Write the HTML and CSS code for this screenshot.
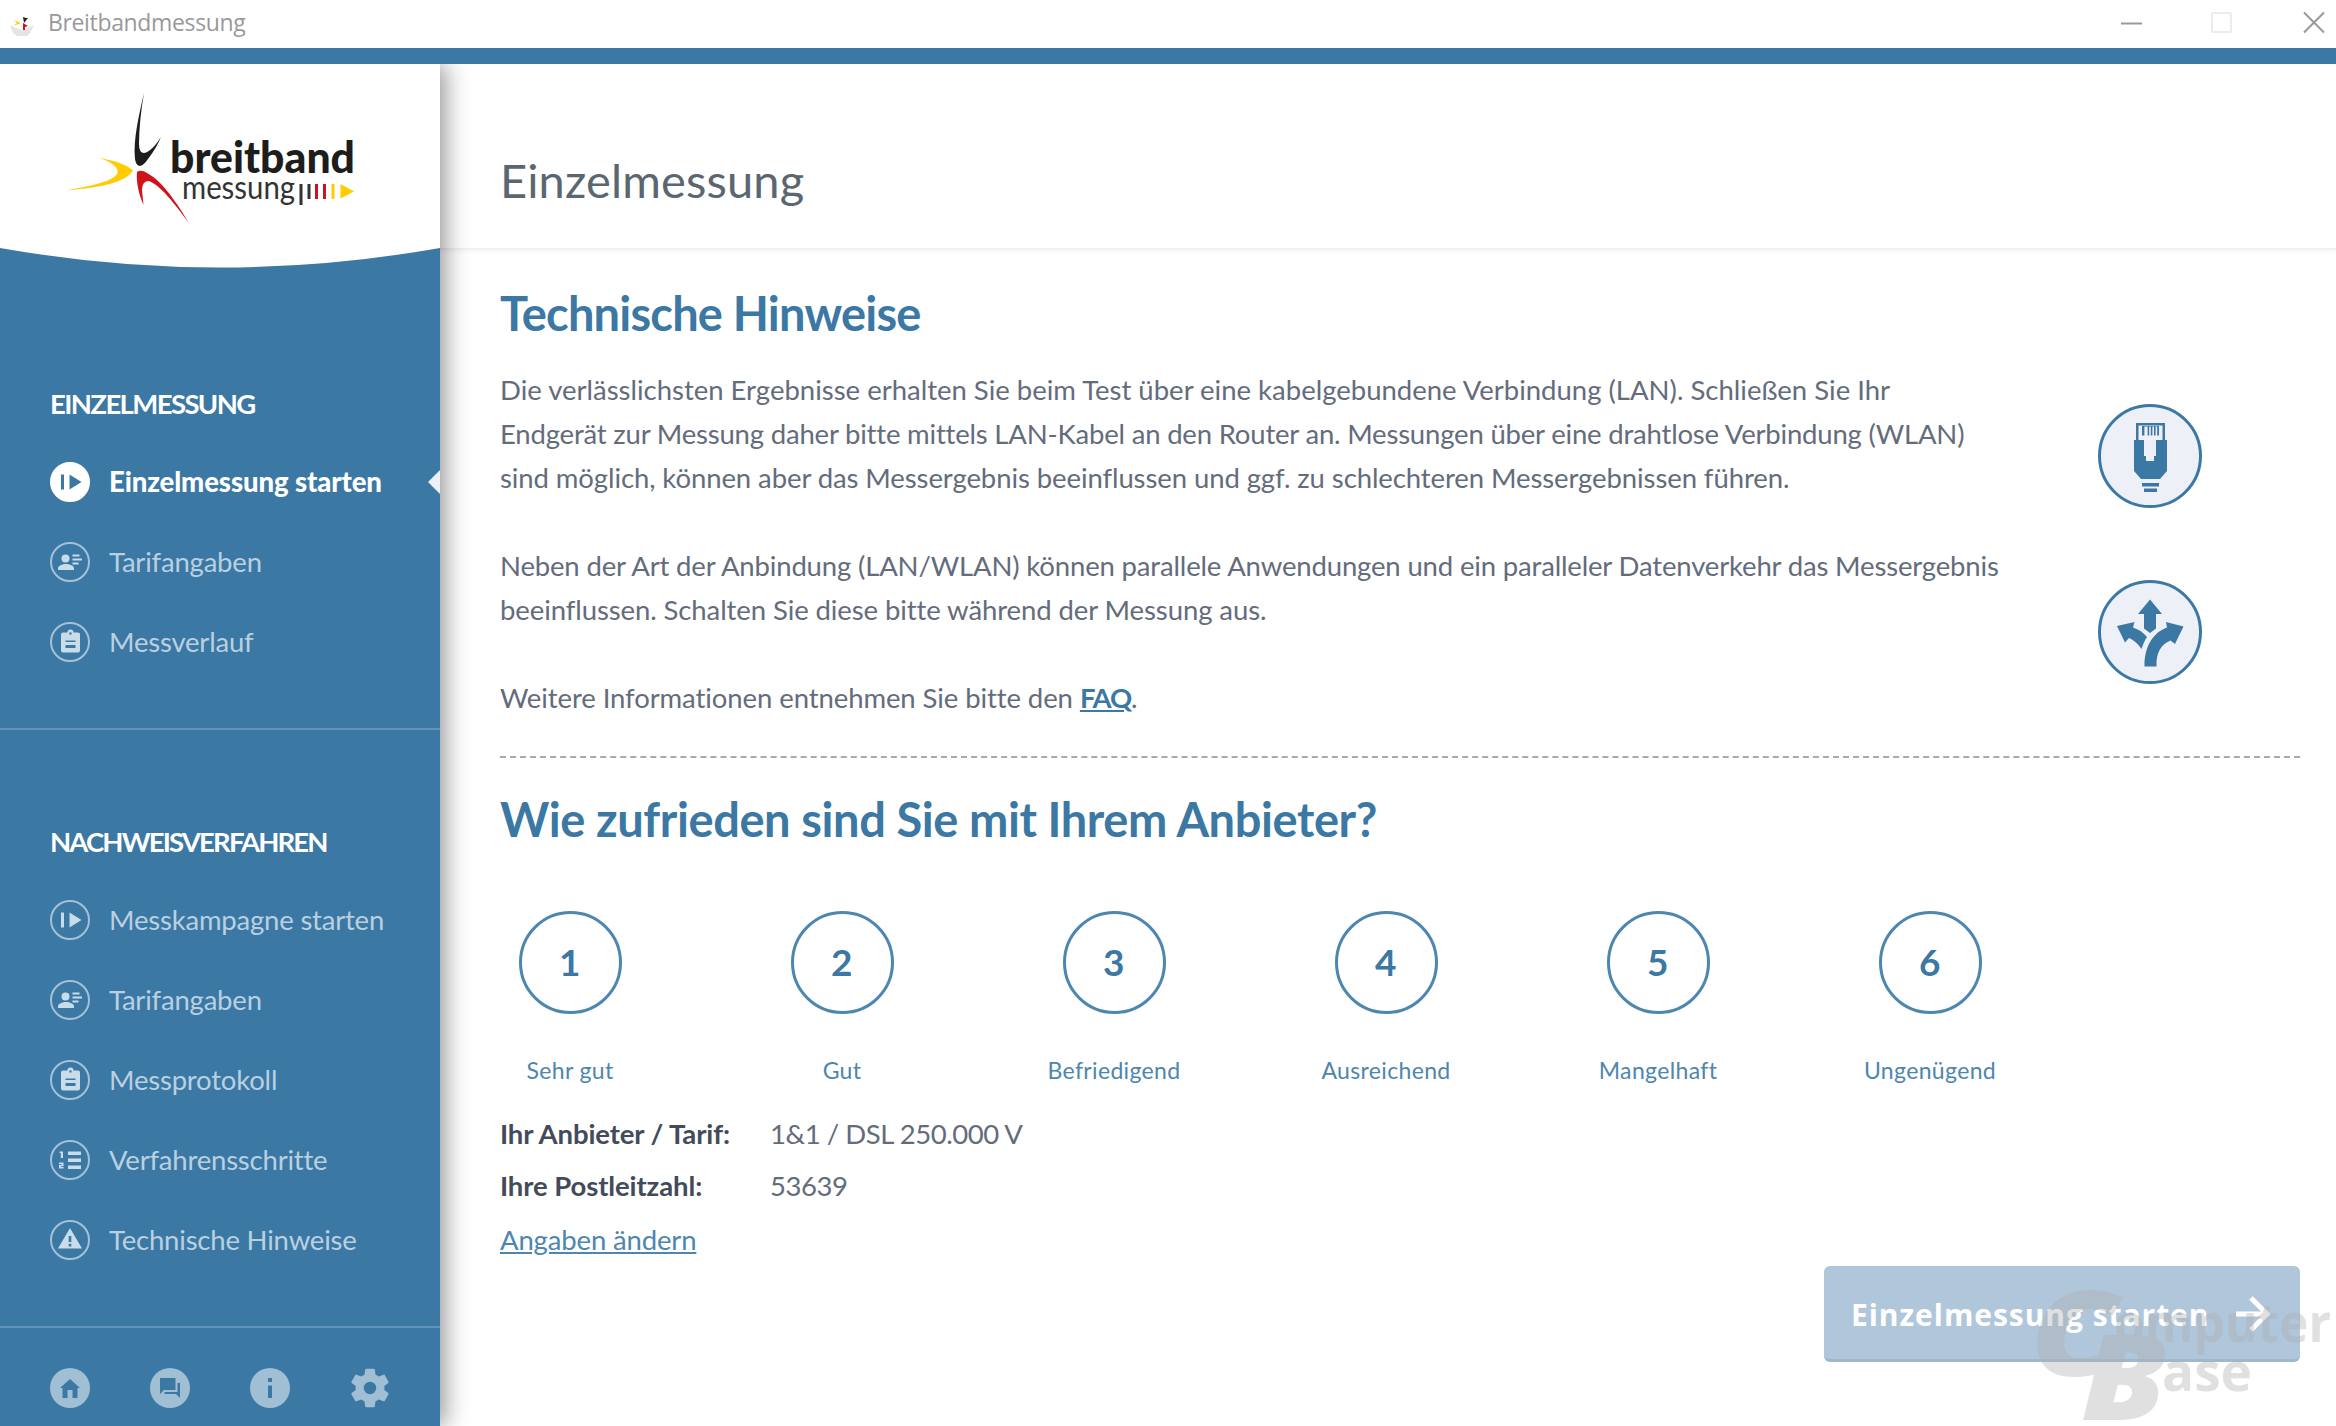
FILE: index.html
```
<!DOCTYPE html>
<html lang="de">
<head>
    <meta charset="UTF-8">
    <meta name="viewport" content="width=device-width, initial-scale=1.0">
    <title>Breitbandmessung</title>
    <link rel="stylesheet" href="styles.css">
</head>
<body>
    <svg class="defs" width="0" height="0">
        <symbol id="i-start" viewBox="0 0 40 40">
            <path d="M11 12.5h3v15h-3zM19.5 12.5l12 7.5-12 7.5z"/>
        </symbol>
        <symbol id="i-tarif" viewBox="0 0 40 40">
            <circle cx="15.5" cy="16.5" r="4"/>
            <path d="M8 28v-1.5c0-3 4.5-4.5 8-4.5s8 1.5 8 4.5V28z"/>
            <path d="M22.5 12.5h7v2h-7zM22.5 16.5h9.500v2h-9.500zM22.500 20.500h6v2h-6z"/>
        </symbol>
        <symbol id="i-clip" viewBox="0 0 40 40">
            <path fill-rule="evenodd" d="M13 10.500h4.500a3 3 0 0 1 6 0H28a2 2 0 0 1 2 2V28.500a2 2 0 0 1-2 2H13a2 2 0 0 1-2-2V12.500a2 2 0 0 1 2-2zM19.300 11.500a1.200 1.200 0 1 0 2.400 0 1.200 1.200 0 0 0-2.400 0zM15.500 18.500v1.500h10v-1.500zM15.500 23v3h10v-3z"/>
        </symbol>
        <symbol id="i-list" viewBox="0 0 40 40">
            <path d="M18 11.500h13v3.500H18zM18 18.500h13v3.500H18zM18 25.500h13v3.500H18zM9.500 11.500H13V18h-2.200v-5H9.500zM9 22.500h4.500v3.700h-2.700v.8h2.700v1.500H9v-3.700h2.700V24H9z"/>
        </symbol>
        <symbol id="i-warn" viewBox="0 0 40 40">
            <path fill-rule="evenodd" d="M20 8l12 20.500H8zM18.700 16v6h2.600v-6zM18.700 23.800v2.600h2.600v-2.600z"/>
        </symbol>
    </svg>

    <div class="window">
        <div class="titlebar">
            <svg class="app-icon" width="28" height="28" viewBox="0 0 28 28">
                <path d="M2 17l4 2 8 3 8-3 4-2-4 8-3 3H9l-4-3z" fill="#e4e4e4"/>
                <path d="M6 12l7 3-8 3 4-3z" fill="#fc0"/>
                <path d="M15 9l3 1h2l-4 5z" fill="#222"/>
                <path d="M15 15l5 3-3 1v3h-2z" fill="#d0121b"/>
            </svg>
            <span class="app-name">Breitbandmessung</span>
            <svg class="controls" width="206" height="24" viewBox="0 0 206 24" fill="none">
                <path d="M2 13.500H23" stroke="#999" stroke-width="2"/>
                <rect x="93" y="3" width="19" height="19" rx="1" stroke="#ececec" stroke-width="2"/>
                <path d="M185 2.500l20 20M205 2.500l-20 20" stroke="#999" stroke-width="2"/>
            </svg>
        </div>

        <div class="body">
            <aside class="sidebar">
                <svg class="logo" width="440" height="204" viewBox="0 64 440 204">
                    <path d="M0 64H440V248Q220 287 0 248z" fill="#fff"/>
                    <path d="M144 93C139 115 133 140 135 159Q136 166 140 166Q144 165 148 159C154 151 158 144 161 137C155 146 150 152 144 153Q139 153 139 144C139 128 141 110 144 93z" fill="#1d1d1b"/>
                    <path d="M99 158C112 160 126 164 133 170.500C127 180 110 187 65 190.500C90 186 112 182 117 174C120 168 112 162 99 158z" fill="#fc0"/>
                    <path d="M137 172Q141 169 147 173C160 180 172 195 189 223C175 204 160 185 149 181Q142 181 142 190L143.500 205C139 195 136 182 137 172z" fill="#d0121b"/>
                    <text class="logo-bold" x="170" y="172.500" textLength="185" lengthAdjust="spacingAndGlyphs">breitband</text>
                    <text class="logo-thin" x="182" y="199" textLength="113" lengthAdjust="spacingAndGlyphs">messung</text>
                    <path d="M299.500 184h3v21h-3zM307.500 184h3v15h-3z" fill="#333"/>
                    <path d="M315 184h3v15h-3zM323 184h3v15h-3z" fill="#d0121b"/>
                    <path d="M331.500 184h3v15h-3zM340.500 184l13.500 7.500-13.500 7z" fill="#fc0"/>
                </svg>

                <nav class="group">
                    <h3 class="tight-1">EINZELMESSUNG</h3>
                    <a class="item active"><span class="badge"><svg><use href="#i-start"/></svg></span>Einzelmessung starten</a>
                    <a class="item"><span class="badge"><svg><use href="#i-tarif"/></svg></span>Tarifangaben</a>
                    <a class="item"><span class="badge"><svg><use href="#i-clip"/></svg></span>Messverlauf</a>
                </nav>
                <nav class="group second">
                    <h3 class="tight-2">NACHWEISVERFAHREN</h3>
                    <a class="item"><span class="badge"><svg><use href="#i-start"/></svg></span>Messkampagne starten</a>
                    <a class="item"><span class="badge"><svg><use href="#i-tarif"/></svg></span>Tarifangaben</a>
                    <a class="item"><span class="badge"><svg><use href="#i-clip"/></svg></span>Messprotokoll</a>
                    <a class="item"><span class="badge"><svg><use href="#i-list"/></svg></span>Verfahrensschritte</a>
                    <a class="item"><span class="badge"><svg><use href="#i-warn"/></svg></span>Technische Hinweise</a>
                </nav>
                <div class="tools">
                    <svg viewBox="0 0 40 40"><path fill-rule="evenodd" d="M20 0a20 20 0 1 0 0 40 20 20 0 0 0 0-40zM20 11l10 9h-2.500v10H22.500v-8h-5v8H12.500V20H10z"/></svg>
                    <svg viewBox="0 0 40 40"><path fill-rule="evenodd" d="M20 0a20 20 0 1 0 0 40 20 20 0 0 0 0-40zM10 10h15.500v12H14l-4 4zM27.500 15H30v15l-4-4H14.500v-2h13z"/></svg>
                    <svg viewBox="0 0 40 40"><path fill-rule="evenodd" d="M20 0a20 20 0 1 0 0 40 20 20 0 0 0 0-40zM18 10v4h4v-4zM18 17.500v12.500h4V17.500z"/></svg>
                    <svg viewBox="2 2 20 20"><path d="M19.140 12.940c.04-.3.06-.61.06-.94 0-.32-.02-.64-.07-.94l2.030-1.580c.18-.14.23-.41.12-.61l-1.920-3.320c-.12-.22-.37-.29-.59-.22l-2.390.96c-.5-.38-1.030-.7-1.620-.94l-.36-2.540c-.04-.24-.24-.41-.48-.41h-3.840c-.24 0-.43.17-.47.41l-.36 2.540c-.59.24-1.130.57-1.620.94l-2.390-.96c-.22-.08-.47 0-.59.22L2.740 8.870c-.12.21-.08.47.12.61l2.030 1.580c-.05.3-.09.63-.09.94s.02.64.07.94l-2.030 1.580c-.18.14-.23.41-.12.61l1.920 3.320c.12.22.37.29.59.22l2.390-.96c.5.38 1.030.7 1.620.94l.36 2.540c.05.24.24.41.48.41h3.840c.24 0 .44-.17.47-.41l.36-2.540c.59-.24 1.130-.56 1.620-.94l2.390.96c.22.08.47 0 .59-.22l1.920-3.320c.12-.22.07-.47-.12-.61l-2.010-1.580zM12 15.100a3.100 3.100 0 1 1 0-6.200 3.100 3.100 0 0 1 0 6.200z"/></svg>
                </div>
            </aside>

            <main class="main">
                <header class="head">
                    <h1>Einzelmessung</h1>
                </header>
                <div class="content">
                    <h2 class="h-hints">Technische Hinweise</h2>
                    <div class="hints">
                        <div class="hint-text">
                            <p>Die verlässlichsten Ergebnisse erhalten Sie beim Test über eine kabelgebundene Verbindung (LAN). Schließen Sie Ihr<br>
                            <span class="t1">Endgerät zur Messung daher bitte mittels LAN-Kabel an den Router an. Messungen über eine drahtlose Verbindung (WLAN)</span><br>
                            <span class="t3">sind möglich, können aber das Messergebnis beeinflussen und ggf. zu schlechteren Messergebnissen führen.</span></p>
                            <p><span class="t2">Neben der Art der Anbindung (LAN/WLAN) können parallele Anwendungen und ein paralleler Datenverkehr das Messergebnis</span><br>
                            <span class="t3">beeinflussen. Schalten Sie diese bitte während der Messung aus.</span></p>
                            <p><span class="t3">Weitere Informationen entnehmen Sie bitte den</span> <a class="faq">FAQ</a>.</p>
                        </div>
                        <div class="hint-icons">
                            <svg width="104" height="104" viewBox="0 0 104 104">
                                <circle cx="52" cy="52" r="50.500" fill="#eef0f7" stroke="#3b78a4" stroke-width="3"/>
                                <path fill="#3b78a4" fill-rule="evenodd" d="M38 19h29v17h2v31l-7 8H43l-7-8V36h2zM40.500 21.500V36H46v16h2v5h8v-5h2V36h6.500V21.500z"/>
                                <path fill="#3b78a4" d="M44 22h17v9.500h-1.800v-9h-1.600v9h-1.600v-9h-1.600v9h-1.600v-9h-1.600v9h-1.600v-9h-1.600v9H48v-9h-1.600v9H44zM44 79h17v3.500H44zM46 84.500h13V88H46z"/>
                            </svg>
                            <svg width="104" height="104" viewBox="0 0 104 104">
                                <circle cx="52" cy="52" r="50.500" fill="#eef0f7" stroke="#3b78a4" stroke-width="3"/>
                                <g fill="#3b78a4">
                                    <path d="M52 19.500L64 34h-6v14.500L52 53l-6-4.500V34h-6z"/>
                                    <path d="M19 46l17.500-4-1.500 5.500c6 2 10.500 5 14 9.500-2.500 3.500-4 7.500-5.500 12-3.500-5.500-8-9-12.500-11l-4 4.500z"/>
                                    <path d="M85.500 46.500L68 42l1 5.500C56 52 46 66 46.500 86.500h12c-.5-14 4.500-22 14-26l4.500 3.500z"/>
                                </g>
                            </svg>
                        </div>
                    </div>

                    <h2 class="h-rate">Wie zufrieden sind Sie mit Ihrem Anbieter?</h2>
                    <div class="rating">
                        <div class="rate"><b>1</b><span>Sehr gut</span></div>
                        <div class="rate"><b>2</b><span>Gut</span></div>
                        <div class="rate"><b>3</b><span>Befriedigend</span></div>
                        <div class="rate"><b>4</b><span>Ausreichend</span></div>
                        <div class="rate"><b>5</b><span>Mangelhaft</span></div>
                        <div class="rate"><b>6</b><span>Ungenügend</span></div>
                    </div>

                    <dl class="info">
                        <dt>Ihr Anbieter / Tarif:</dt><dd>1&amp;1 / DSL 250.000 V</dd>
                        <dt>Ihre Postleitzahl:</dt><dd>53639</dd>
                    </dl>
                    <a class="change">Angaben ändern</a>

                    <button class="start">
                        <span>Einzelmessung starten</span>
                        <svg width="36" height="36" viewBox="0 0 36 36" fill="none" stroke="#fff" stroke-width="5"><path d="M1 18H32M16 2l16 16-16 16"/></svg>
                    </button>
                </div>
            </main>
        </div>

        <svg class="watermark" width="306" height="146" viewBox="2030 1280 306 146">
            <g fill="#aeaeae">
                <text class="wm-big" x="2030" y="1376" textLength="88" lengthAdjust="spacingAndGlyphs">C</text>
                <text class="wm-big" x="2081" y="1420" textLength="86" lengthAdjust="spacingAndGlyphs">B</text>
                <text class="wm" x="2114" y="1342" textLength="217" lengthAdjust="spacingAndGlyphs">omputer</text>
                <text class="wm" x="2162" y="1391" textLength="90" lengthAdjust="spacingAndGlyphs">ase</text>
            </g>
        </svg>
    </div>
</body>
</html>
```
FILE: styles.css
```
* {
    margin: 0;
    padding: 0;
    box-sizing: border-box;
}
body {
    background: #fff;
    color: #646c7c;
    font-family: Lato, "Open Sans", sans-serif;
    font-size: 27.5px;
    line-height: 44px;
}
.defs {
    display: block;
}
.window {
    position: relative;
    display: flex;
    flex-direction: column;
    width: 2336px;
    height: 1426px;
    overflow: hidden;
}

/* title bar */
.titlebar {
    display: flex;
    align-items: center;
    flex: none;
    height: 64px;
    padding: 0 11px 4px 8px;
    border-bottom: 16px solid #3b78a4;
}
.app-icon {
    margin-right: 12px;
}
.app-name {
    padding-bottom: 1px;
    color: #999;
    font-family: "Open Sans", sans-serif;
    font-size: 23px;
    letter-spacing: -0.35px;
}
.controls {
    margin-left: auto;
}

/* sidebar */
.body {
    display: flex;
    flex: 1;
    min-height: 0;
}
.sidebar {
    position: relative;
    z-index: 1;
    display: flex;
    flex-direction: column;
    flex: none;
    width: 440px;
    background: #3b78a4;
    box-shadow: 4px 0 24px rgba(0, 0, 0, 0.45);
    clip-path: inset(0 -50px 0 0);
}
.logo {
    display: block;
    flex: none;
}
.logo-bold {
    font-size: 43px;
    font-weight: 900;
    fill: #1d1d1b;
}
.logo-thin {
    font-size: 32px;
    fill: #333;
}
.group {
    flex: none;
    height: 462px;
    padding: 116px 0 0 50px;
    border-bottom: 2px solid #6295b9;
}
.group.second {
    height: 598px;
    padding-top: 92px;
}
.group h3 {
    margin-bottom: 18px;
    color: #fff;
    font-size: 27.5px;
    line-height: 40px;
}
.tight-1 {
    letter-spacing: -1.6px;
}
.tight-2 {
    letter-spacing: -1.85px;
}
.item {
    position: relative;
    display: flex;
    align-items: center;
    height: 80px;
    color: #b9d0e1;
    letter-spacing: -0.2px;
}
.badge {
    width: 40px;
    height: 40px;
    margin-right: 19px;
    border: 2px solid #a3c2d8;
    border-radius: 50%;
    fill: #c9dcea;
}
.badge svg {
    display: block;
    width: 40px;
    height: 40px;
    margin: -2px;
}
.item.active {
    color: #fff;
    font-weight: 900;
    letter-spacing: -0.1px;
}
.active .badge {
    background: #fff;
    border-color: #fff;
    fill: #3b78a4;
}
.active::after {
    content: "";
    position: absolute;
    right: 0;
    border: 12px solid transparent;
    border-right-color: #eef0f7;
    border-left-width: 0;
}
.tools {
    display: flex;
    gap: 60px;
    padding: 40px 50px 0;
}
.tools svg {
    width: 40px;
    height: 40px;
    fill: #a0bfd4;
}

/* main */
.main {
    flex: 1;
}
.head {
    height: 186px;
    padding: 86px 60px 0;
    border-bottom: 2px solid #f1f1f1;
    box-shadow: 0 2px 3px rgba(0, 0, 0, 0.03);
}
h1 {
    color: #5b6770;
    font-size: 47px;
    font-weight: 400;
    line-height: 60px;
    letter-spacing: 0.15px;
}
.content {
    display: flex;
    flex-direction: column;
    padding: 33px 36px 0 60px;
}
h2 {
    color: #3b78a4;
    font-size: 47px;
    line-height: 60px;
}
.h-hints {
    letter-spacing: -0.8px;
}
.h-rate {
    margin-top: 31px;
    letter-spacing: -0.4px;
}
.hints {
    display: flex;
    justify-content: space-between;
    padding: 25px 98px 36px 0;
    border-bottom: 2px dashed #aaa;
}
.hint-text p + p {
    margin-top: 44px;
}
.hint-text {
    white-space: nowrap;
}
.t1 {
    letter-spacing: -0.19px;
}
.t2 {
    letter-spacing: -0.16px;
}
.t3 {
    letter-spacing: -0.09px;
}
.faq {
    color: #3b78a4;
    font-weight: 700;
    letter-spacing: -1.2px;
    text-decoration: underline;
}
.hint-icons {
    display: flex;
    flex-direction: column;
    gap: 72px;
    padding-top: 36px;
}
.rating {
    display: flex;
    margin: 62px 0 0 -66px;
}
.rate {
    display: flex;
    flex-direction: column;
    align-items: center;
    width: 272px;
    color: #4d86af;
    font-size: 23px;
    line-height: 32px;
    letter-spacing: 0.35px;
}
.rate b {
    width: 103px;
    height: 103px;
    margin-bottom: 40px;
    border: 3px solid #4d86af;
    border-radius: 50%;
    color: #3b78a4;
    font-size: 37px;
    line-height: 95px;
    text-align: center;
}
.info {
    display: grid;
    grid-template-columns: 270px auto;
    margin-top: 22px;
    line-height: 52px;
}
.info dt {
    color: #434b5b;
    font-weight: 700;
    letter-spacing: -0.1px;
}
.info dd {
    letter-spacing: -0.45px;
}
.change {
    align-self: flex-start;
    color: #4d86af;
    line-height: 56px;
    letter-spacing: -0.15px;
    text-decoration: underline;
}
.start {
    display: flex;
    align-items: center;
    justify-content: space-between;
    align-self: flex-end;
    width: 476px;
    height: 96px;
    margin-top: -2px;
    padding: 3px 29px 0 27px;
    background: #b0c7db;
    border: 0;
    border-bottom: 3px solid #9fb8cc;
    border-radius: 6px;
    color: #fff;
    font: 700 30px "Open Sans", sans-serif;
    letter-spacing: 0.95px;
    white-space: nowrap;
}

.watermark {
    position: absolute;
    right: 0;
    bottom: 0;
    z-index: 2;
    opacity: 0.37;
    font-family: "Open Sans", sans-serif;
    font-weight: 800;
}
.wm-big {
    font-size: 118px;
    font-style: italic;
}
.wm {
    font-size: 54px;
    font-weight: 700;
}
```
